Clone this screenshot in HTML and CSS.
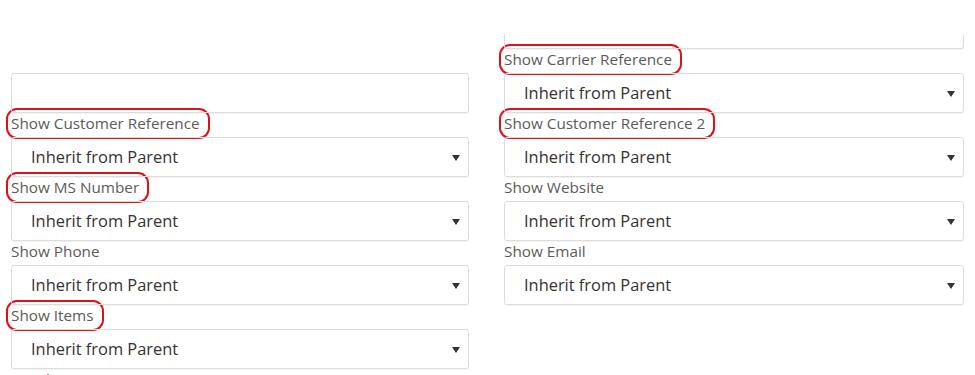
FILE: index.html
```html
<!DOCTYPE html>
<html lang="en">
<head>
    <meta charset="UTF-8">
    <meta name="viewport" content="width=device-width, initial-scale=1.0">
    <title>Display settings</title>
    <link rel="stylesheet" href="styles.css">
</head>
<body>
    <div class="form">
        <div class="column">
            <div class="spacer"></div>
            <div class="field empty"></div>
            <label class="label"><span class="marked">Show Customer Reference</span></label>
            <div class="field">Inherit from Parent <svg class="arrow" width="8" height="6" viewBox="0 0 8 6"><path d="M0 0H8L4 6Z"/></svg></div>
            <label class="label"><span class="marked">Show MS Number</span></label>
            <div class="field">Inherit from Parent <svg class="arrow" width="8" height="6" viewBox="0 0 8 6"><path d="M0 0H8L4 6Z"/></svg></div>
            <label class="label">Show Phone</label>
            <div class="field">Inherit from Parent <svg class="arrow" width="8" height="6" viewBox="0 0 8 6"><path d="M0 0H8L4 6Z"/></svg></div>
            <label class="label"><span class="marked">Show Items</span></label>
            <div class="field">Inherit from Parent <svg class="arrow" width="8" height="6" viewBox="0 0 8 6"><path d="M0 0H8L4 6Z"/></svg></div>
            <label class="label">Email Invoices</label>
        </div>
        <div class="column">
            <div class="top-gap"></div>
            <div class="field stub"></div>
            <label class="label"><span class="marked">Show Carrier Reference</span></label>
            <div class="field">Inherit from Parent <svg class="arrow" width="8" height="6" viewBox="0 0 8 6"><path d="M0 0H8L4 6Z"/></svg></div>
            <label class="label"><span class="marked">Show Customer Reference 2</span></label>
            <div class="field">Inherit from Parent <svg class="arrow" width="8" height="6" viewBox="0 0 8 6"><path d="M0 0H8L4 6Z"/></svg></div>
            <label class="label">Show Website</label>
            <div class="field">Inherit from Parent <svg class="arrow" width="8" height="6" viewBox="0 0 8 6"><path d="M0 0H8L4 6Z"/></svg></div>
            <label class="label">Show Email</label>
            <div class="field">Inherit from Parent <svg class="arrow" width="8" height="6" viewBox="0 0 8 6"><path d="M0 0H8L4 6Z"/></svg></div>
        </div>
    </div>
</body>
</html>
```

FILE: styles.css
```css
body {
    margin: 0;
    background-color: #ffffff;
    font-family: "Open Sans", "Liberation Sans", sans-serif;
    overflow: hidden;
}
.form {
    display: grid;
    grid-template-columns: 458px 460px;
    column-gap: 35px;
    padding-left: 11px;
}
.column {
    display: flex;
    flex-direction: column;
}
.spacer {
    height: 73px;
}
.top-gap {
    height: 34px;
}
.label {
    display: block;
    height: 24px;
    line-height: 21px;
    font-size: 15.3px;
    color: #5a5a5a;
    white-space: nowrap;
}
.marked {
    display: inline-block;
    padding-right: 5px;
    border-radius: 6px;
    outline: 2.5px solid #d9141b;
    outline-offset: 3px;
}
.field {
    position: relative;
    box-sizing: border-box;
    height: 40px;
    padding-left: 19px;
    line-height: 38px;
    font-size: 16.4px;
    color: #333;
    border: 1px solid #dcdcdc;
    border-radius: 3px;
    box-shadow: 0 1px 1px rgba(0, 0, 0, 0.05);
}
.stub {
    height: 15px;
    border-top: none;
    border-radius: 0 0 3px 3px;
}
.arrow {
    position: absolute;
    right: 8px;
    top: 17px;
    fill: #333;
}
```
